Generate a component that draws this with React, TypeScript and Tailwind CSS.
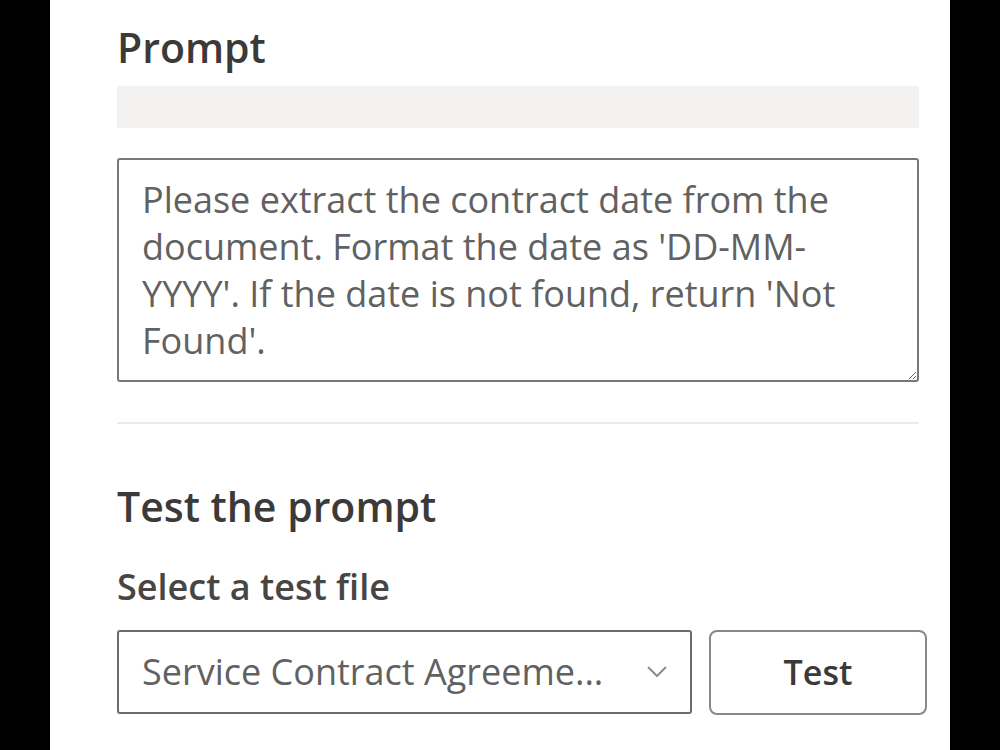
import React from "react";

export default function App() {
  return (
    <div className="w-[1000px] h-[750px] bg-black flex justify-center overflow-hidden" style={{ fontFamily: '"Open Sans", "Noto Sans", sans-serif' }}>
      <div className="w-[900px] h-full bg-white pl-[67px] pr-[31px] flex flex-col">
        <h1 className="mt-[22px] h-[50px] text-[41px] leading-[50px] font-semibold text-[#3b3a39] whitespace-nowrap">Prompt</h1>
        <div className="mt-[14px] h-[42px] w-[802px] bg-[#f3f2f1]" />
        <textarea
          readOnly
          defaultValue="Please extract the contract date from the document. Format the date as 'DD-MM-YYYY'. If the date is not found, return 'Not Found'."
          className="mt-[30px] w-[802px] h-[224px] border-2 border-[#7a7876] rounded-[3px] pl-[23px] pr-[20px] pt-[16px] text-[36px] leading-[47px] text-[#616161] outline-none resize-y"
        />
        <div className="mt-[40px] h-[2px] w-[802px] bg-[#edebe9]" />
        <h2 className="mt-[57px] h-[50px] text-[41px] leading-[50px] font-semibold text-[#3b3a39] whitespace-nowrap">Test the prompt</h2>
        <div className="mt-[34px] h-[44px] text-[36px] leading-[44px] font-semibold text-[#484644] whitespace-nowrap">Select a test file</div>
        <div className="mt-[21px] flex gap-[17px] w-[810px]">
          <div className="w-[575px] h-[84px] border-2 border-[#6e6c6a] rounded-[3px] flex items-center pl-[23px] pr-[23px]">
            <span className="flex-1 text-[36px] text-[#616161] whitespace-nowrap">Service Contract Agreeme...</span>
            <svg width="20" height="12" viewBox="0 0 20 12" fill="none">
              <path d="M1.5 1.5 L10 10 L18.5 1.5" stroke="#8a8886" strokeWidth="1.8" strokeLinecap="round" strokeLinejoin="round" />
            </svg>
          </div>
          <button className="w-[218px] h-[85px] border-2 border-[#8a8886] rounded-[8px] bg-white text-[34px] font-semibold text-[#3b3a39]">Test</button>
        </div>
      </div>
    </div>
  );
}
